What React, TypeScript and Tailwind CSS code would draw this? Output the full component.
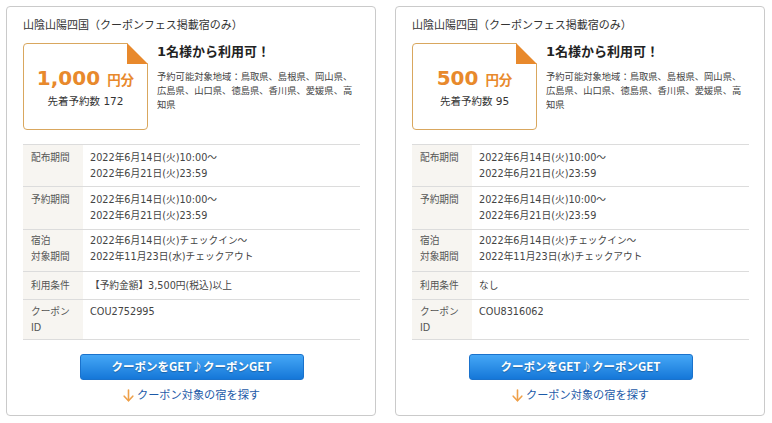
import React from "react";

type CardProps = {
  amount: string;
  count: string;
  condition: string;
  couponId: string;
};

function Corner() {
  return (
    <svg className="absolute -top-px -right-px" width="21" height="21" viewBox="0 0 21 21">
      <polygon points="0,0 21,0 21,21" fill="#ffffff" />
      <polygon points="0,0 0,21 21,21" fill="#e8892c" />
    </svg>
  );
}

function DownArrow() {
  return (
    <svg width="11" height="13" viewBox="0 0 11 13" className="mr-[3px] mt-[2px]">
      <path d="M5.5 1 V11.5" stroke="#eea04a" strokeWidth="1.6" fill="none" strokeLinecap="round" />
      <path d="M1.2 7.2 L5.5 11.8 L9.8 7.2" stroke="#eea04a" strokeWidth="1.6" fill="none" strokeLinecap="round" strokeLinejoin="round" />
    </svg>
  );
}

function Row({
  label,
  children,
  pad,
}: {
  label: React.ReactNode;
  children: React.ReactNode;
  pad: string;
}) {
  return (
    <div className="flex border-b border-[#dcdcdc] text-[9.7px] leading-[16px] text-[#444]">
      <div className={"w-[60px] shrink-0 bg-[#f7f5f1] px-[8px] text-[#555] " + pad}>{label}</div>
      <div className={"flex-1 pl-[7px] " + pad}>{children}</div>
    </div>
  );
}

function Card({ amount, count, condition, couponId }: CardProps) {
  return (
    <div className="flex h-[410px] w-[370px] flex-col rounded-[4px] border border-[#cacaca] bg-white pl-[16px] pr-[15px] pt-[12px]">
      <div className="text-[11px] leading-[14px] text-[#333]">山陰山陽四国（クーポンフェス掲載宿のみ）</div>
      <div className="mt-[10px] flex gap-[9px]">
        <div className="relative flex h-[87px] w-[125px] shrink-0 flex-col items-center justify-center gap-[3px] rounded-[4px] border border-[#d9a75e] bg-white">
          <Corner />
          <div className="flex items-baseline leading-[24px] text-[#e8892c]">
            <span className="text-[20px] font-bold">{amount}</span>
            <span className="ml-[7px] font-['Noto_Sans_CJK_JP',sans-serif] text-[13.5px] font-bold">円分</span>
          </div>
          <div className="text-[10.5px] leading-[14px] text-[#333]">先着予約数 {count}</div>
        </div>
        <div className="flex-1 pt-[1px]">
          <div className="text-[13px] font-bold leading-[16px] text-[#222]">1名様から利用可！</div>
          <div className="mt-[9px] whitespace-nowrap font-['Noto_Sans_CJK_JP',sans-serif] text-[9.3px] leading-[14px] text-[#444]">
            予約可能対象地域：鳥取県、島根県、岡山県、
            <br />
            広島県、山口県、徳島県、香川県、愛媛県、高
            <br />
            知県
          </div>
        </div>
      </div>
      <div className="mt-[14px] border-t border-[#dcdcdc]">
        <Row label="配布期間" pad="pt-[5px] pb-[4px]">
          2022年6月14日(火)10:00～
          <br />
          2022年6月21日(火)23:59
        </Row>
        <Row label="予約期間" pad="pt-[5px] pb-[5px]">
          2022年6月14日(火)10:00～
          <br />
          2022年6月21日(火)23:59
        </Row>
        <Row
          label={
            <>
              宿泊
              <br />
              対象期間
            </>
          }
          pad="pt-[3px] pb-[6px]"
        >
          2022年6月14日(火)チェックイン～
          <br />
          2022年11月23日(水)チェックアウト
        </Row>
        <Row label="利用条件" pad="pt-[6px] pb-[5px]">
          {condition}
        </Row>
        <Row
          label={
            <>
              クーポン
              <br />
              ID
            </>
          }
          pad="pt-[4px] pb-[3px]"
        >
          {couponId}
        </Row>
      </div>
      <div className="mt-[14px] flex justify-center">
        <div className="flex h-[26px] w-[224px] items-center justify-center rounded-[3px] border border-[#1a72cc] bg-[linear-gradient(#45a7f6,#1577d8)] font-['Noto_Sans_CJK_JP',sans-serif] text-[11.5px] font-bold text-white [text-shadow:0_1px_1px_rgba(0,0,0,0.25)]">
          クーポンをGET♪クーポンGET
        </div>
      </div>
      <div className="mt-[6px] flex items-center justify-center font-['Noto_Sans_CJK_JP',sans-serif] text-[11.2px] leading-[16px] text-[#1d5aa8]">
        <DownArrow />
        <span>クーポン対象の宿を探す</span>
      </div>
    </div>
  );
}

export default function App() {
  return (
    <div className="flex h-[423px] w-[772px] gap-[19px] bg-white pl-[6px] pt-[6px] font-['DejaVu_Sans','Noto_Sans_CJK_JP',sans-serif]">
      <Card amount="1,000" count="172" condition=" 【予約金額】3,500円(税込)以上" couponId="COU2752995" />
      <Card amount="500" count="95" condition="なし" couponId="COU8316062" />
    </div>
  );
}
